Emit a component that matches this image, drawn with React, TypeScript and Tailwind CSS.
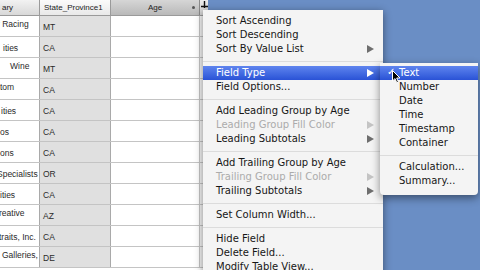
import React from 'react';

type Row = { a: string; aCls: string; top?: boolean; b: string };

const rows: Row[] = [
  { a: 'r Racing', aCls: 'ml-[-3px]', top: true, b: 'MT' },
  { a: 'ities', aCls: 'ml-[3px]', b: 'CA' },
  { a: 'Wine', aCls: 'ml-[10px]', top: true, b: 'MT' },
  { a: 'tom', aCls: 'ml-0', top: true, b: 'CA' },
  { a: 'ities', aCls: 'ml-[1px]', b: 'CA' },
  { a: 'os', aCls: 'ml-0', b: 'CA' },
  { a: 'ons', aCls: 'ml-0', b: 'CA' },
  { a: 'Specialists', aCls: 'ml-[-3px]', b: 'OR' },
  { a: 'ities', aCls: 'ml-0', b: 'CA' },
  { a: 'reative', aCls: 'ml-[-1px]', top: true, b: 'AZ' },
  { a: 'traits, Inc.', aCls: 'ml-[-1px]', b: 'CA' },
  { a: 'Galleries,', aCls: 'ml-[2px]', top: true, b: 'DE' },
];

type Item =
  | { sep: true }
  | { label: string; disabled?: boolean; arrow?: boolean; active?: boolean };

const menu: Item[] = [
  { label: 'Sort Ascending' },
  { label: 'Sort Descending' },
  { label: 'Sort By Value List', arrow: true },
  { sep: true },
  { label: 'Field Type', arrow: true, active: true },
  { label: 'Field Options...' },
  { sep: true },
  { label: 'Add Leading Group by Age' },
  { label: 'Leading Group Fill Color', disabled: true, arrow: true },
  { label: 'Leading Subtotals', arrow: true },
  { sep: true },
  { label: 'Add Trailing Group by Age' },
  { label: 'Trailing Group Fill Color', disabled: true, arrow: true },
  { label: 'Trailing Subtotals', arrow: true },
  { sep: true },
  { label: 'Set Column Width...' },
  { sep: true },
  { label: 'Hide Field' },
  { label: 'Delete Field...' },
  { label: 'Modify Table View...' },
];

const sub: Item[] = [
  { label: 'Text', active: true },
  { label: 'Number' },
  { label: 'Date' },
  { label: 'Time' },
  { label: 'Timestamp' },
  { label: 'Container' },
  { sep: true },
  { label: 'Calculation...' },
  { label: 'Summary...' },
];

function Arrow({ light, dim }: { light?: boolean; dim?: boolean }) {
  return (
    <svg width="7" height="8" viewBox="0 0 7 8">
      <path d="M0 0 L7 4 L0 8 Z" fill={light ? '#ffffff' : dim ? '#c4c4c4' : '#6e6e6e'} />
    </svg>
  );
}

function MenuItem({ it, inset }: { it: Item; inset: string }) {
  if ('sep' in it) {
    return (
      <div className="h-[10px] flex items-center">
        <div className="w-full h-px bg-[#dcdcdc]" />
      </div>
    );
  }
  const base = it.active
    ? 'bg-gradient-to-b from-[#5f84ee] to-[#2a52d6] text-white'
    : it.disabled
      ? 'text-[#ababab]'
      : 'text-[#161616]';
  return (
    <div className={`h-[14px] flex items-center justify-between pr-[9px] ${inset} ${base}`}>
      <span className="whitespace-nowrap leading-none">{it.label}</span>
      {it.arrow && <Arrow light={it.active} dim={it.disabled} />}
    </div>
  );
}

export default function App() {
  return (
    <div
      className="relative w-[480px] h-[270px] overflow-hidden bg-[#6a8ec5]"
      style={{ fontFamily: '"Liberation Sans", Arial, sans-serif' }}
    >
      {/* Table window */}
      <div className="w-[208px] h-full bg-white flex flex-col">
        {/* Header */}
        <div className="flex h-[16px] text-[8px] text-[#222] border-b border-[#9a9a9a]">
          <div className="w-[40px] flex items-center bg-gradient-to-b from-[#f2f2f2] to-[#d8d8d8] border-r border-[#9a9a9a] overflow-hidden">
            <span className="ml-[2px] whitespace-nowrap">ary</span>
          </div>
          <div className="w-[71px] flex items-center bg-gradient-to-b from-[#fbfbfb] to-[#e9e9e9] border-r border-[#9a9a9a]">
            <span className="ml-[4px] whitespace-nowrap">State_Province1</span>
          </div>
          <div className="w-[89px] relative flex items-center justify-center bg-gradient-to-b from-[#d6d6d6] to-[#b9b9b9] border-r border-[#8a8a8a]">
            <span>Age</span>
            <span className="absolute right-[4px] top-[6px] w-[3px] h-[3px] rounded-full bg-[#555]" />
          </div>
          <div className="flex-1 flex items-start justify-center bg-gradient-to-b from-[#eeeeee] to-[#d0d0d0]">
            <svg width="7" height="7" viewBox="0 0 7 7" className="mt-[1px]">
              <path d="M3.5 0 V7 M0 5.5 H7" stroke="#111" strokeWidth="1.4" />
            </svg>
          </div>
        </div>

        {/* Rows */}
        {rows.map((r, i) => (
          <div key={i} className="flex h-[21px] shrink-0 text-[8.5px] text-[#2a2a2a] border-b border-[#c4c4c4]">
            <div className={`w-[40px] overflow-hidden flex ${r.top ? 'items-start pt-[2px]' : 'items-center pt-[2px]'} border-r border-[#a9a9a9]`}>
              <span className={`whitespace-nowrap ${r.aCls}`}>{r.a}</span>
            </div>
            <div className="w-[71px] flex items-center pt-[3px] bg-[#e0e0e0] border-r border-[#a9a9a9]">
              <span className="ml-[3px]">{r.b}</span>
            </div>
            <div className="w-[89px] border-r border-[#c4c4c4]" />
            <div className="flex-1 bg-[#f4f4f4]" />
          </div>
        ))}
      </div>

      {/* Context menu */}
      <div
        className="absolute left-[203px] top-[10px] w-[180px] pt-[4px] pb-[6px] bg-[#f4f4f4] shadow-[0_2px_8px_rgba(0,0,0,0.45)] text-[10px]"
        style={{ fontFamily: '"DejaVu Sans", "Lucida Grande", sans-serif' }}
      >
        {menu.map((it, i) => (
          <MenuItem key={i} it={it} inset="pl-[13px]" />
        ))}
      </div>

      {/* Field Type submenu */}
      <div
        className="absolute left-[380px] top-[63px] w-[98px] pt-[3px] pb-[7px] bg-[#f4f4f4] rounded-b-[4px] shadow-[0_3px_8px_rgba(0,0,0,0.45)] text-[10px]"
        style={{ fontFamily: '"DejaVu Sans", "Lucida Grande", sans-serif' }}
      >
        {sub.map((it, i) => (
          <MenuItem key={i} it={it} inset="pl-[19px]" />
        ))}
        <span className="absolute left-[7px] top-[4px] text-[10px] text-white leading-none">✓</span>
      </div>

      {/* Mouse pointer */}
      <svg className="absolute left-[392px] top-[70px]" width="9" height="14" viewBox="0 0 9 14">
        <path d="M0.5 0.5 L0.5 11 L3 8.6 L4.8 12.8 L6.4 12.1 L4.7 8 L8 8 Z" fill="#000" stroke="#fff" strokeWidth="1" />
      </svg>
    </div>
  );
}
